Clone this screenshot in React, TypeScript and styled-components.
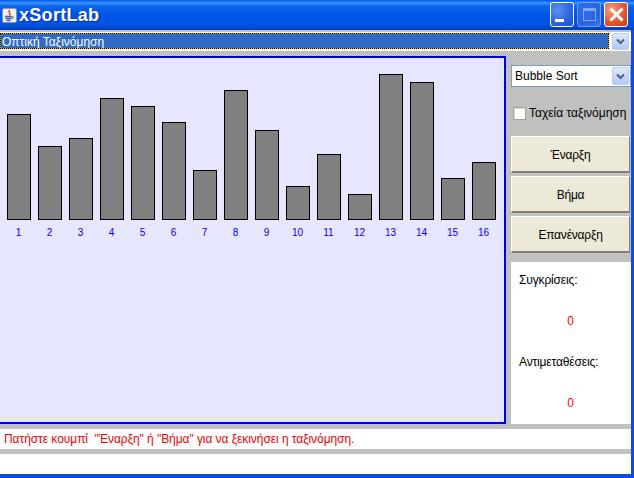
import React from "react";
import styled, { createGlobalStyle } from "styled-components";

const GlobalStyle = createGlobalStyle`
  html, body {
    margin: 0;
    padding: 0;
    background: #c0c0c0;
    overflow: hidden;
  }
`;

const barTops = [114, 146, 138, 98, 106, 122, 170, 90, 130, 186, 154, 194, 74, 82, 178, 162];

const Window = styled.div`
  width: 634px;
  height: 478px;
  display: flex;
  flex-direction: column;
  font-family: "Liberation Sans", Arial, sans-serif;
  font-size: 12px;
  background: #0a4ee0;
  overflow: hidden;
`;

const TitleBar = styled.div`
  height: 30px;
  flex: none;
  display: flex;
  align-items: center;
  padding: 0 6px 0 2px;
  box-sizing: border-box;
  background: linear-gradient(
    180deg,
    #0058e6 0%,
    #3a93ff 10%,
    #0a64ea 20%,
    #0054e3 50%,
    #0055e5 80%,
    #0045c8 94%,
    #003db0 100%
  );
`;

const Title = styled.div`
  margin-left: 2px;
  flex: 1;
  color: #fff;
  font-family: "Liberation Sans", Arial, sans-serif;
  font-size: 18px;
  font-weight: 700;
  letter-spacing: 0.3px;
  text-shadow: 1px 1px 0 #0a2f9c;
`;

const WinButtons = styled.div`
  display: flex;
  gap: 3px;
  margin-bottom: 1px;
`;

const WinButton = styled.div<{ $kind: "min" | "max" | "close" }>`
  width: 24px;
  height: 25px;
  box-sizing: border-box;
  border-radius: 3px;
  border: 1px solid ${(p) => (p.$kind === "max" ? "#6f9ff0" : "#fff")};
  background: ${(p) =>
    p.$kind === "close"
      ? "radial-gradient(circle at 30% 30%, #f0a080, #e25a30 55%, #c83c14)"
      : p.$kind === "max"
        ? "radial-gradient(circle at 30% 30%, #2f6fea, #2a64dc 60%, #3a78ee)"
        : "radial-gradient(circle at 30% 30%, #5c92f4, #2a63e0 60%, #1f50cc)"};
`;

const ButtonGlyph = styled.svg`
  display: block;
`;

const Body = styled.div`
  flex: 1;
  display: flex;
  flex-direction: column;
  margin-right: 3px;
  margin-bottom: 4px;
  background: #c0c0c0;
  min-height: 0;
`;

const TopCombo = styled.div`
  height: 19px;
  margin-top: 2px;
  flex: none;
  display: flex;
  align-items: flex-start;
  padding: 1px 2px 0 0;
  box-sizing: border-box;
  background: #fff;
`;

const TopComboValue = styled.div`
  flex: 1;
  height: 16px;
  box-sizing: border-box;
  border: 1px solid #f0a830;
  outline: 1px dotted #000;
  outline-offset: -1px;
  background: #316ac5;
  color: #fff;
  line-height: 16px;
  padding-left: 1px;
  white-space: nowrap;
`;

const ComboArrow = styled.div`
  width: 17px;
  flex: none;
  box-sizing: border-box;
  border-radius: 2px;
  border: 1px solid #b8cdf5;
  background: linear-gradient(180deg, #dfe9fc, #b4c8f6);
  display: flex;
  align-items: center;
  justify-content: center;
`;

const TopArrow = styled(ComboArrow)`
  height: 17px;
  margin-left: 3px;
`;

const AlgoArrow = styled(ComboArrow)`
  margin: 1px;
`;

const Main = styled.div`
  flex: 1;
  min-height: 0;
  display: flex;
  margin-top: 5px;
`;

const Canvas = styled.div`
  width: 506px;
  flex: none;
  box-sizing: border-box;
  background: #e6e6ff;
  border: 2px solid #0000e6;
  border-left: 0;
  padding: 16px 0 0 7px;
`;

const Bars = styled.div`
  display: flex;
  gap: 7px;
  height: 146px;
  align-items: flex-end;
`;

const Bar = styled.div`
  width: 24px;
  box-sizing: border-box;
  background: #808080;
  border: 1px solid #000;
`;

const Labels = styled.div`
  display: flex;
  gap: 7px;
  margin-top: 7px;
`;

const Label = styled.div`
  width: 23px;
  margin-right: 1px;
  text-align: center;
  color: #0000ff;
  font-size: 10px;
  line-height: 12px;
`;

const Side = styled.div`
  flex: 1;
  margin-left: 5px;
  display: flex;
  flex-direction: column;
`;

const AlgoCombo = styled.div`
  height: 22px;
  width: 120px;
  margin-top: 9px;
  box-sizing: border-box;
  display: flex;
  background: #fff;
  border: 1px solid #7f9db9;
`;

const AlgoValue = styled.div`
  flex: 1;
  padding-left: 3px;
  line-height: 20px;
  color: #000;
`;

const CheckRow = styled.label`
  display: flex;
  align-items: center;
  height: 16px;
  margin-top: 18px;
  margin-left: 2px;
  color: #000;
  white-space: nowrap;
`;

const CheckBox = styled.span`
  width: 13px;
  height: 13px;
  flex: none;
  margin-right: 3px;
  box-sizing: border-box;
  background: #fff;
  border: 1px solid #a5a58c;
  box-shadow: inset 1px 1px 0 #dcdcd0;
`;

const ActionButton = styled.div`
  width: 119px;
  height: 37px;
  margin-bottom: 3px;
  padding-top: 2px;
  box-sizing: border-box;
  background: #ece9d8;
  border-top: 1px solid #fff;
  border-left: 1px solid #fff;
  border-right: 1px solid #85816c;
  border-bottom: 2px solid #85816c;
  display: flex;
  align-items: center;
  justify-content: center;
  color: #000;
  letter-spacing: -0.2px;
`;

const Buttons = styled.div`
  margin-top: 15px;
`;

const Stats = styled.div`
  flex: 1;
  margin-top: 6px;
  background: #fff;
  padding: 11px 0 0 8px;
  display: flex;
  flex-direction: column;
  color: #000;
  letter-spacing: -0.15px;
`;

const StatLabel = styled.div<{ $gap?: number }>`
  line-height: 14px;
  margin-top: ${(p) => p.$gap ?? 0}px;
`;

const StatValue = styled.div`
  color: #ff0000;
  text-align: center;
  line-height: 14px;
  margin-top: 27px;
  margin-left: -9px;
`;

const MessageRow = styled.div`
  height: 20px;
  flex: none;
  margin-top: 5px;
  background: #fff;
  color: #f00000;
  line-height: 20px;
  padding-left: 4px;
  letter-spacing: -0.06px;
  white-space: nowrap;
`;

const ArrowIcon = () => (
  <svg width="9" height="7" viewBox="0 0 9 7">
    <path d="M1 1.5 L4.5 5 L8 1.5" fill="none" stroke="#4d6185" strokeWidth="2" />
  </svg>
);

const JavaIcon = () => (
  <svg width="15" height="15" viewBox="0 0 15 15">
    <rect x="0.5" y="0.5" width="14" height="14" rx="1.5" fill="#eef0f6" stroke="#8a94b0" />
    <path d="M7.5 2 C5.5 4 9.5 5 7.5 7.5" fill="none" stroke="#d9541e" strokeWidth="1.6" />
    <path d="M3 8.5 H10 M3.5 10.5 H9.5 M4.5 12.5 H8.5" stroke="#4a5f90" strokeWidth="1.3" />
    <path d="M10 8.5 Q13 9 10 11" fill="none" stroke="#4a5f90" />
  </svg>
);

const App = () => {
  return (
    <Window>
      <GlobalStyle />
      <TitleBar>
        <JavaIcon />
        <Title>xSortLab</Title>
        <WinButtons>
          <WinButton $kind="min">
            <ButtonGlyph width="22" height="23" viewBox="0 0 22 23">
              <rect x="4" y="16" width="9" height="3" fill="#fff" />
            </ButtonGlyph>
          </WinButton>
          <WinButton $kind="max">
            <ButtonGlyph width="22" height="23" viewBox="0 0 22 23">
              <rect x="5.5" y="5.5" width="12" height="12" fill="none" stroke="#7fa6f0" />
              <rect x="5" y="5" width="13" height="3" fill="#7fa6f0" />
            </ButtonGlyph>
          </WinButton>
          <WinButton $kind="close">
            <ButtonGlyph width="22" height="23" viewBox="0 0 22 23">
              <path d="M5.5 5.5 L17.5 17.5 M17.5 5.5 L5.5 17.5" stroke="#fff" strokeWidth="3" />
            </ButtonGlyph>
          </WinButton>
        </WinButtons>
      </TitleBar>
      <Body>
        <TopCombo>
          <TopComboValue>Οπτική Ταξινόμηση</TopComboValue>
          <TopArrow>
            <ArrowIcon />
          </TopArrow>
        </TopCombo>
        <Main>
          <Canvas>
            <Bars>
              {barTops.map((top, i) => (
                <Bar key={i} style={{ height: 220 - top }} />
              ))}
            </Bars>
            <Labels>
              {barTops.map((_, i) => (
                <Label key={i}>{i + 1}</Label>
              ))}
            </Labels>
          </Canvas>
          <Side>
            <AlgoCombo>
              <AlgoValue>Bubble Sort</AlgoValue>
              <AlgoArrow>
                <ArrowIcon />
              </AlgoArrow>
            </AlgoCombo>
            <CheckRow>
              <CheckBox />
              Ταχεία ταξινόμηση
            </CheckRow>
            <Buttons>
              <ActionButton>Έναρξη</ActionButton>
              <ActionButton>Βήμα</ActionButton>
              <ActionButton>Επανέναρξη</ActionButton>
            </Buttons>
            <Stats>
              <StatLabel>Συγκρίσεις:</StatLabel>
              <StatValue>0</StatValue>
              <StatLabel $gap={27}>Αντιμεταθέσεις:</StatLabel>
              <StatValue>0</StatValue>
            </Stats>
          </Side>
        </Main>
        <MessageRow>Πατήστε κουμπί &nbsp;"Έναρξη" ή "Βήμα" για να ξεκινήσει η ταξινόμηση.</MessageRow>
        <MessageRow />
      </Body>
    </Window>
  );
};

export default App;
